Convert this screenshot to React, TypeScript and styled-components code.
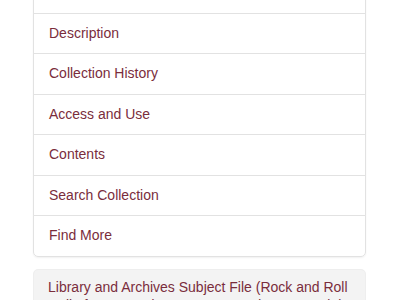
import React from "react";
import styled, { createGlobalStyle } from "styled-components";

const Global = createGlobalStyle`
  html, body { margin: 0; padding: 0; background: #ffffff; }
  body { font-family: "Liberation Sans", Arial, Helvetica, sans-serif; overflow: hidden; }
`;

const Page = styled.div`
  width: 400px;
  height: 300px;
  overflow: hidden;
  padding: 0 34px 0 33px;
  box-sizing: border-box;
`;

const ListPanel = styled.div`
  margin-top: -28px;
  display: flex;
  flex-direction: column;
  border-radius: 0 0 5px 5px;
  box-shadow: 0 1px 2px rgba(0, 0, 0, 0.06);
`;

const ListItem = styled.div<{ $faint?: boolean }>`
  border: 1px solid #e2e2e2;
  margin-bottom: -1px;
  padding: 10px 15px;
  line-height: 19.5px;
  font-size: 14px;
  color: ${(p) => (p.$faint ? "#efefe2" : "#7a2d3c")};
  background: #fff;
  &:last-child {
    margin-bottom: 0;
    border-radius: 0 0 5px 5px;
  }
`;

const Well = styled.div`
  margin-top: 12px;
  background: #f3f3f3;
  border: 1px solid #eeeeee;
  border-radius: 5px;
  padding: 8px 14px 10px;
  font-size: 14px;
  line-height: 18px;
  color: #7a2d3c;
`;

const items = [
  "Description",
  "Collection History",
  "Access and Use",
  "Contents",
  "Search Collection",
  "Find More",
];

export default function App() {
  return (
    <>
      <Global />
      <Page>
        <ListPanel>
          <ListItem $faint>Summary</ListItem>
          {items.map((t) => (
            <ListItem key={t}>{t}</ListItem>
          ))}
        </ListPanel>
        <Well>
          Library and Archives Subject File (Rock and Roll Hall of Fame and
          Museum Records - Curatorial Files)
        </Well>
      </Page>
    </>
  );
}
